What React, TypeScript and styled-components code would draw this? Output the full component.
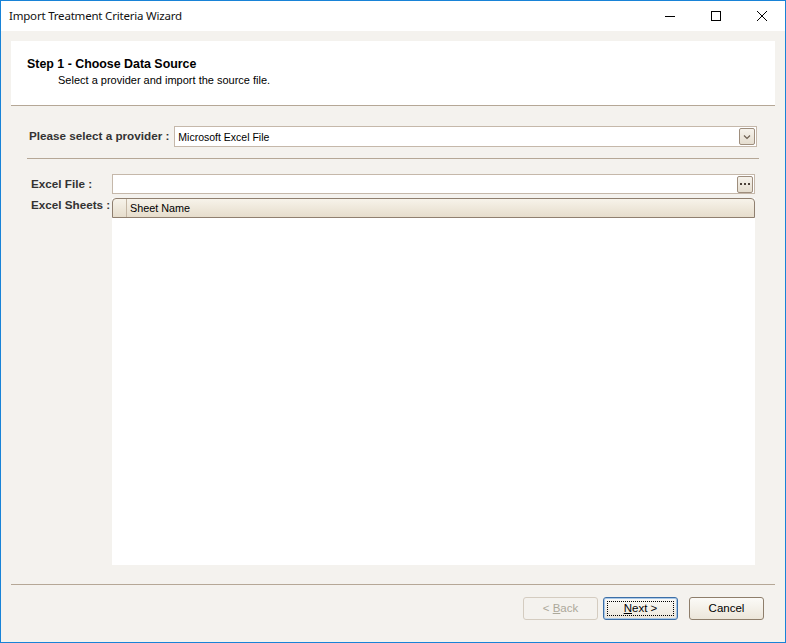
import React from "react";
import styled, { createGlobalStyle } from "styled-components";

const Global = createGlobalStyle`
  html, body { margin: 0; padding: 0; background: #ffffff; }
  body { font-family: "Liberation Sans", Arial, sans-serif; }
  * { box-sizing: border-box; }
`;

const Window = styled.div`
  width: 786px;
  height: 643px;
  border: 1px solid #1883d7;
  display: flex;
  flex-direction: column;
  background: #f4f2ee;
  overflow: hidden;
`;

const TitleBar = styled.div`
  height: 30px;
  background: #ffffff;
  display: flex;
  align-items: center;
  flex: none;
`;

const Title = styled.div`
  flex: 1;
  padding-left: 8px;
  padding-bottom: 1px;
  font-family: "Noto Sans", "Open Sans", sans-serif;
  font-size: 11.5px;
  color: #111;
  letter-spacing: -0.2px;
`;

const WinButton = styled.div`
  width: 46px;
  height: 30px;
  display: flex;
  align-items: center;
  justify-content: center;
`;

const Content = styled.div`
  flex: 1;
  display: flex;
  flex-direction: column;
  padding: 10px 10px 0 10px;
`;

const Header = styled.div`
  height: 65px;
  background: #ffffff;
  border-bottom: 1px solid #b5a796;
  padding: 16px 0 0 16px;
  flex: none;
`;

const StepTitle = styled.div`
  font-family: "Liberation Sans", Arial, sans-serif;
  font-weight: bold;
  font-size: 12.4px;
  color: #000;
  line-height: 15px;
`;

const StepSub = styled.div`
  font-family: "Liberation Sans", Arial, sans-serif;
  font-size: 11px;
  color: #000;
  padding-left: 31px;
  line-height: 14px;
  margin-top: 1px;
`;

const ProviderRow = styled.div`
  display: flex;
  align-items: center;
  margin: 20px 18px 0 18px;
  gap: 5px;
`;

const Label = styled.div`
  font-family: "Liberation Sans", Arial, sans-serif;
  font-weight: bold;
  font-size: 11.7px;
  color: #333333;
  white-space: nowrap;
`;

const ProviderLabel = styled(Label)`
  padding-bottom: 2px;
`;

const Combo = styled.div`
  flex: 1;
  height: 21px;
  border: 1px solid #c5b8aa;
  background: #ffffff;
  display: flex;
  align-items: center;
  padding: 0 1px 0 3px;
`;

const FieldText = styled.div`
  flex: 1;
  font-family: "Liberation Sans", Arial, sans-serif;
  font-size: 10.5px;
  color: #000;
`;

const SmallButton = styled.div`
  width: 16px;
  height: 17px;
  border: 1px solid #9e8e7d;
  border-radius: 2px;
  background: linear-gradient(#f6f3ec, #e5ddcf);
  display: flex;
  align-items: center;
  justify-content: center;
  flex: none;
`;

const Separator = styled.div<{ $inset: number; $top?: number }>`
  height: 1px;
  background: #b5a796;
  margin: ${(p) => p.$top ?? 0}px ${(p) => p.$inset}px 0;
  flex: none;
`;

const FormGrid = styled.div`
  display: grid;
  grid-template-columns: 81px 1fr;
  grid-template-rows: 20px 367px;
  row-gap: 4px;
  margin: 15px 20px 19px 20px;
`;

const GridLabel = styled(Label)<{ $top: number }>`
  padding-top: ${(p) => p.$top}px;
`;

const TextBox = styled.div`
  height: 20px;
  border: 1px solid #c5b8aa;
  background: #ffffff;
  display: flex;
  align-items: center;
  justify-content: flex-end;
  padding-right: 1px;
`;

const SheetGrid = styled.div`
  background: #ffffff;
  display: flex;
  flex-direction: column;
`;

const GridHeader = styled.div`
  height: 20px;
  border: 1px solid #8f7f6f;
  border-radius: 4px 4px 0 0;
  background: linear-gradient(#f7f3ea, #e6ddcc);
  display: flex;
  align-items: center;
  flex: none;
`;

const RowHeaderCell = styled.div`
  width: 14px;
  height: 100%;
  border-right: 1px solid #c4b6a4;
  flex: none;
`;

const ColumnTitle = styled.div`
  padding-left: 3px;
  font-family: "Liberation Sans", Arial, sans-serif;
  font-size: 10.8px;
  color: #000;
`;

const Footer = styled.div`
  display: flex;
  justify-content: flex-end;
  padding: 12px 11px 0 0;
`;

const Button = styled.div<{ $disabled?: boolean; $focused?: boolean; $gap?: number }>`
  width: 75px;
  height: 23px;
  margin-left: ${(p) => p.$gap ?? 0}px;
  border: 1px solid ${(p) => (p.$disabled ? "#d4ccc0" : p.$focused ? "#3d6fa6" : "#8e7e6b")};
  border-radius: 3px;
  background: ${(p) => (p.$disabled ? "#f4f2ee" : "linear-gradient(#fbfaf7, #ece6da)")};
  display: flex;
  align-items: center;
  justify-content: center;
  padding-bottom: 1px;
  font-family: "Liberation Sans", Arial, sans-serif;
  font-size: 11.5px;
  color: ${(p) => (p.$disabled ? "#aca89a" : "#000")};
  position: relative;
  box-shadow: ${(p) => (p.$focused ? "inset 0 0 0 1px #a9c9ea" : "none")};
`;

const FocusRing = styled.span`
  position: absolute;
  inset: 3px 3px 3px 3px;
  border: 1px dotted #000;
`;

const ButtonLabel = styled.span`
  position: relative;
  & u { text-decoration: underline; }
`;

function Chevron() {
  return (
    <svg width="10" height="8" viewBox="0 0 10 8">
      <path d="M2 2.5 L5 5.5 L8 2.5" fill="none" stroke="#6e6052" strokeWidth="1.2" />
    </svg>
  );
}

function Dots() {
  return (
    <svg width="12" height="4" viewBox="0 0 12 4">
      <rect x="1" y="1" width="2" height="2" fill="#4a4038" />
      <rect x="5" y="1" width="2" height="2" fill="#4a4038" />
      <rect x="9" y="1" width="2" height="2" fill="#4a4038" />
    </svg>
  );
}

export default function App() {
  return (
    <>
      <Global />
      <Window>
        <TitleBar>
          <Title>Import Treatment Criteria Wizard</Title>
          <WinButton>
            <svg width="12" height="12" viewBox="0 0 12 12">
              <path d="M1 6.5 H11" stroke="#000" strokeWidth="1" />
            </svg>
          </WinButton>
          <WinButton>
            <svg width="12" height="12" viewBox="0 0 12 12">
              <rect x="1.5" y="1.5" width="9" height="9" fill="none" stroke="#000" strokeWidth="1" />
            </svg>
          </WinButton>
          <WinButton>
            <svg width="12" height="12" viewBox="0 0 12 12">
              <path d="M1 1 L11 11 M11 1 L1 11" stroke="#000" strokeWidth="1" />
            </svg>
          </WinButton>
        </TitleBar>
        <Content>
          <Header>
            <StepTitle>Step 1 - Choose Data Source</StepTitle>
            <StepSub>Select a provider and import the source file.</StepSub>
          </Header>
          <ProviderRow>
            <ProviderLabel>Please select a provider :</ProviderLabel>
            <Combo>
              <FieldText>Microsoft Excel File</FieldText>
              <SmallButton>
                <Chevron />
              </SmallButton>
            </Combo>
          </ProviderRow>
          <Separator $inset={16} $top={11} />
          <FormGrid>
            <GridLabel $top={3}>Excel File :</GridLabel>
            <TextBox>
              <SmallButton>
                <Dots />
              </SmallButton>
            </TextBox>
            <GridLabel $top={0}>Excel Sheets :</GridLabel>
            <SheetGrid>
              <GridHeader>
                <RowHeaderCell />
                <ColumnTitle>Sheet Name</ColumnTitle>
              </GridHeader>
            </SheetGrid>
          </FormGrid>
          <Separator $inset={0} />
          <Footer>
            <Button $disabled>
              <ButtonLabel>
                &lt; <u>B</u>ack
              </ButtonLabel>
            </Button>
            <Button $focused $gap={5}>
              <FocusRing />
              <ButtonLabel>
                <u>N</u>ext &gt;
              </ButtonLabel>
            </Button>
            <Button $gap={11}>
              <ButtonLabel>Cancel</ButtonLabel>
            </Button>
          </Footer>
        </Content>
      </Window>
    </>
  );
}
